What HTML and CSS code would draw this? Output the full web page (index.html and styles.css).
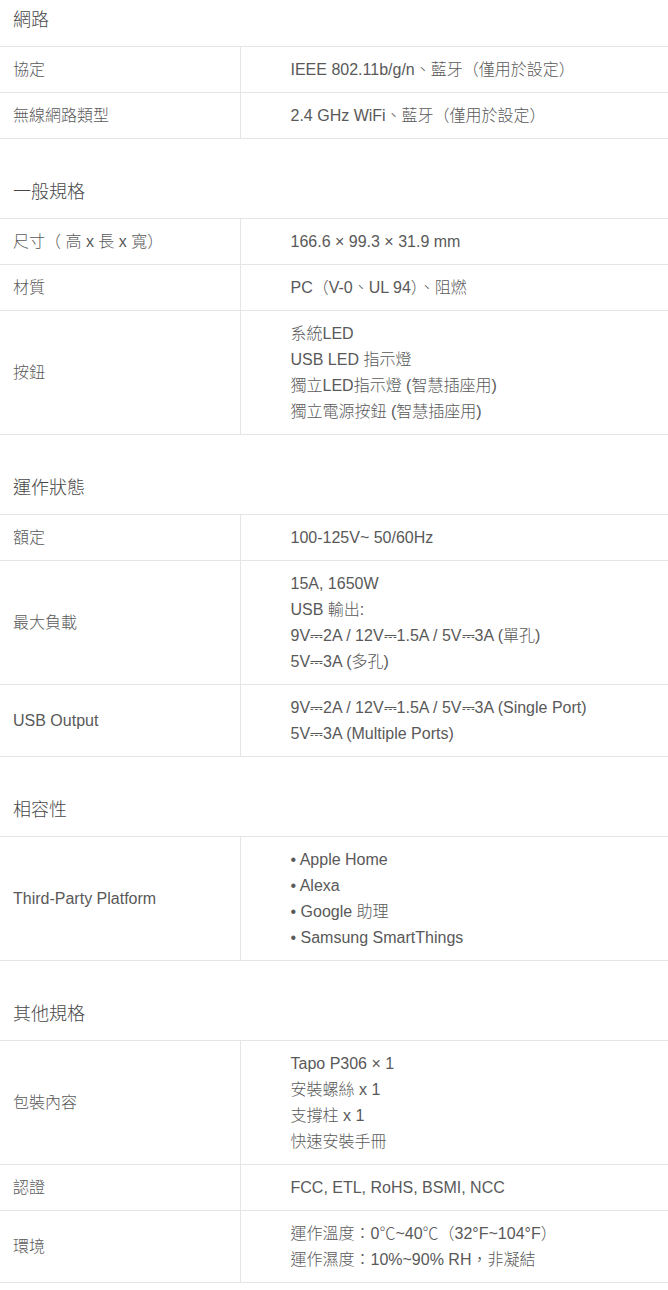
FILE: index.html
```html
<!DOCTYPE html>
<html lang="zh-Hant">
<head>
<meta charset="utf-8">
<link rel="stylesheet" href="styles.css">
</head>
<body>
<div class="specs">
  <section class="group">
    <h3 class="group-title">網路</h3>
    <table class="spec-table">
      <colgroup><col class="c-label"><col class="c-value"></colgroup>
      <tr><td class="label">協定</td><td class="value">IEEE 802.11b/g/n、藍牙（僅用於設定）</td></tr>
      <tr><td class="label">無線網路類型</td><td class="value">2.4 GHz WiFi、藍牙（僅用於設定）</td></tr>
    </table>
  </section>
  <section class="group">
    <h3 class="group-title">一般規格</h3>
    <table class="spec-table">
      <colgroup><col class="c-label"><col class="c-value"></colgroup>
      <tr><td class="label">尺寸（ 高 x 長 x 寬）</td><td class="value">166.6 × 99.3 × 31.9 mm</td></tr>
      <tr><td class="label">材質</td><td class="value">PC（V-0、UL 94）、阻燃</td></tr>
      <tr><td class="label">按鈕</td><td class="value">系統LED<br>USB LED 指示燈<br>獨立LED指示燈 (智慧插座用)<br>獨立電源按鈕 (智慧插座用)</td></tr>
    </table>
  </section>
  <section class="group">
    <h3 class="group-title">運作狀態</h3>
    <table class="spec-table">
      <colgroup><col class="c-label"><col class="c-value"></colgroup>
      <tr><td class="label">額定</td><td class="value">100-125V~ 50/60Hz</td></tr>
      <tr><td class="label">最大負載</td><td class="value">15A, 1650W<br>USB 輸出:<br>9V⎓2A / 12V⎓1.5A / 5V⎓3A (單孔)<br>5V⎓3A (多孔)</td></tr>
      <tr><td class="label">USB Output</td><td class="value">9V⎓2A / 12V⎓1.5A / 5V⎓3A (Single Port)<br>5V⎓3A (Multiple Ports)</td></tr>
    </table>
  </section>
  <section class="group">
    <h3 class="group-title">相容性</h3>
    <table class="spec-table">
      <colgroup><col class="c-label"><col class="c-value"></colgroup>
      <tr><td class="label">Third-Party Platform</td><td class="value">• Apple Home<br>• Alexa<br>• Google 助理<br>• Samsung SmartThings</td></tr>
    </table>
  </section>
  <section class="group">
    <h3 class="group-title">其他規格</h3>
    <table class="spec-table">
      <colgroup><col class="c-label"><col class="c-value"></colgroup>
      <tr><td class="label">包裝內容</td><td class="value">Tapo P306 × 1<br>安裝螺絲 x 1<br>支撐柱 x 1<br>快速安裝手冊</td></tr>
      <tr><td class="label">認證</td><td class="value">FCC, ETL, RoHS, BSMI, NCC</td></tr>
      <tr><td class="label">環境</td><td class="value">運作溫度：0℃~40℃（32°F~104°F）<br>運作濕度：10%~90% RH，非凝結</td></tr>
    </table>
  </section>
</div>
</body>
</html>
```
FILE: styles.css
```css
html, body {
  margin: 0;
  padding: 0;
  background: #ffffff;
}
body {
  font-family: "Liberation Sans", Arial, "Noto Sans CJK TC", sans-serif;
  font-weight: 300;
  color: #595959;
}
.specs {
  width: 668px;
}
.group {
  margin-top: 33px;
}
.group:first-child {
  margin-top: 0;
}
.group-title {
  margin: 0;
  padding: 7px 13px 13px;
  font-size: 18px;
  line-height: 26px;
  font-weight: 300;
  color: #474747;
}
.spec-table {
  width: 100%;
  border-collapse: collapse;
  table-layout: fixed;
  font-size: 16px;
  line-height: 26px;
}
.c-label { width: 240px; }
.spec-table tr {
  border-top: 1px solid #e5e5e5;
  border-bottom: 1px solid #e5e5e5;
}
.spec-table td {
  padding: 10px 0 9px;
  vertical-align: middle;
}
.label {
  padding-left: 13px !important;
  border-right: 1px solid #e5e5e5;
}
.value {
  padding-left: 50px !important;
}
```
